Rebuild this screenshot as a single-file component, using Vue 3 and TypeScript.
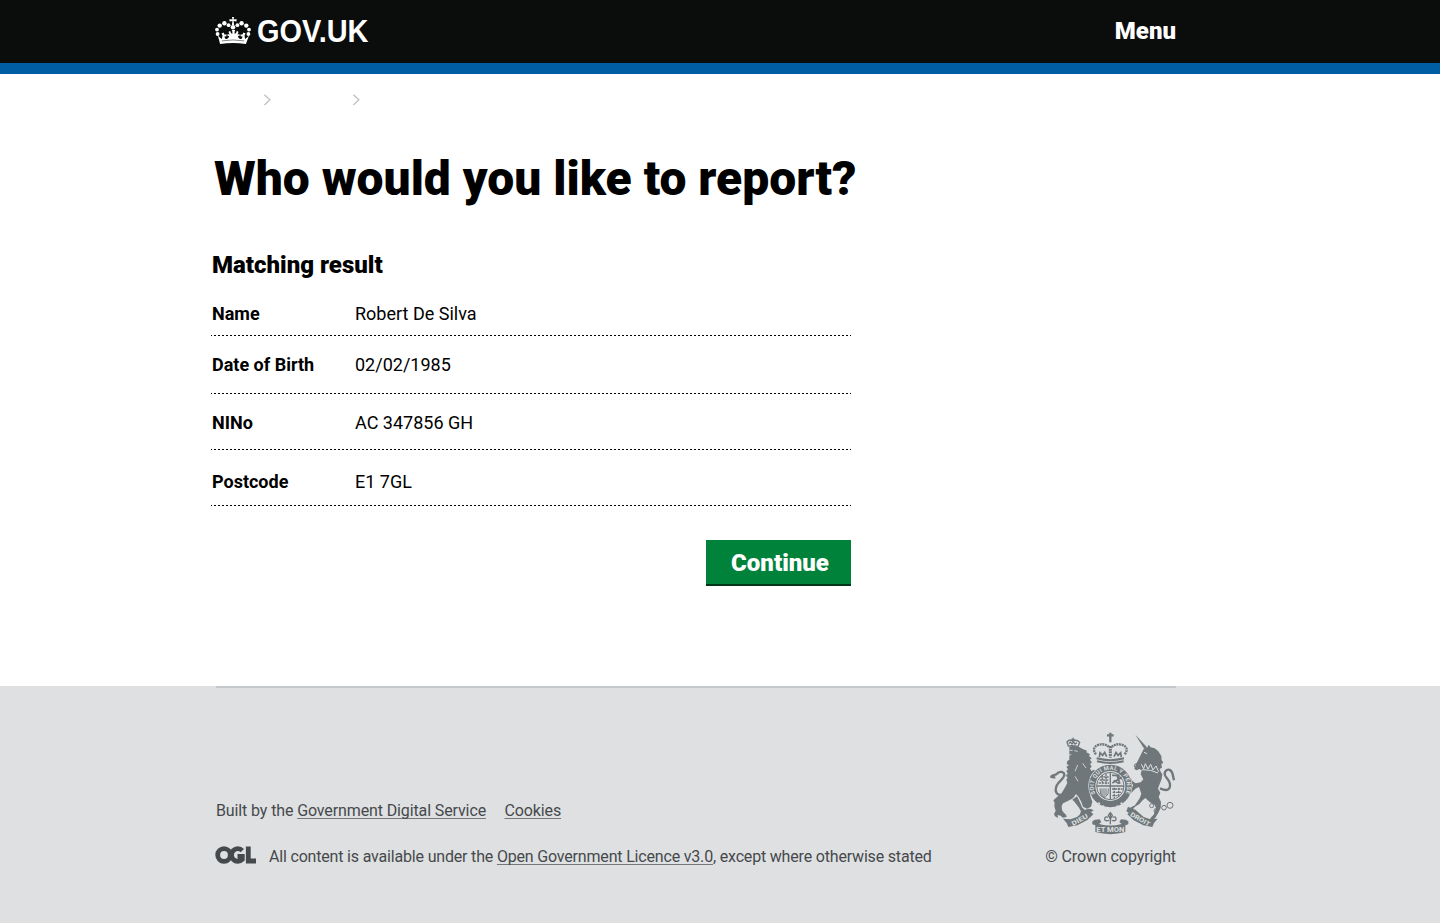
<script setup lang="ts">
interface Detail { label: string; value: string; height: number; top: number }

const details: Detail[] = [
  { label: 'Name', value: 'Robert De Silva', height: 43, top: 10 },
  { label: 'Date of Birth', value: '02/02/1985', height: 58, top: 18 },
  { label: 'NINo', value: 'AC 347856 GH', height: 56, top: 18 },
  { label: 'Postcode', value: 'E1 7GL', height: 56, top: 21 },
]

const beads: [number, number, number][] = [
  [2.6, 17, 1.9], [2, 12.6, 1.9], [4.7, 8.6, 2.2], [9.4, 6.3, 2.2], [13.6, 8.2, 1.9],
  [22.4, 8.2, 1.9], [26.6, 6.3, 2.2], [31.3, 8.6, 2.2], [34, 12.6, 1.9], [33.4, 17, 1.9],
]
</script>

<template>
  <div class="page">
    <header class="header">
      <div class="wrap header-row">
        <a class="brand">
          <svg class="crown" viewBox="0 0 36 27" width="36" height="27">
            <g fill="#fff">
              <circle v-for="(b, i) in beads" :key="i" :cx="b[0]" :cy="b[1]" :r="b[2]" />
              <circle cx="18" cy="10.200" r="2.300" />
              <path d="M17 0h2l-.4 2.400 2.900-.5v2.700l-2.900-.5.5 4h-2.200l.5-4-2.900.5V1.900l2.900.5z" />
              <path d="M5.100 27 2.800 18.300c1.600 2 2.700 3.100 4.100 3.600l.6-3.500-1-2 2.100-1 .9 2.200 2.200-.2-.5 2.200-1.600-.4c.1 1.900.5 2.900 1.700 2.800 1.600-.1 2.600-1.500 2.900-3.200l-1.600.5-.1-2.400 2 .5-1-2.300 1.600-1.300.9 2.300 1.300 1 .1-2.300-.6-1.700h3.400l-.6 1.700.1 2.300 1.300-1 .9-2.300 1.600 1.300-1 2.300 2-.5-.1 2.400-1.600-.5c.3 1.700 1.300 3.100 2.900 3.200 1.200.1 1.600-.9 1.700-2.800l-1.600.4-.5-2.200 2.200.2.900-2.200 2.100 1-1 2 .6 3.500c1.400-.5 2.500-1.600 4.100-3.600L30.900 27q-12.900-1.800-25.800 0z" />
            </g>
            <path d="M6.800 23.900q11.200-1.900 22.400 0" fill="none" stroke="#0b0c0c" stroke-width=".5" />
          </svg>
          <svg class="wordmark" width="112" height="30" viewBox="0 0 112 30">
            <text x="-1" y="25.300" textLength="111.500" lengthAdjust="spacingAndGlyphs">GOV.UK</text>
          </svg>
        </a>
        <a class="menu">Menu</a>
      </div>
    </header>

    <nav class="crumbs">
      <svg v-for="n in 2" :key="n" width="8" height="12" viewBox="0 0 8 12"><path d="M1.400.7 6.900 5.800 1.400 10.900" fill="none" stroke="#bfc1c3" stroke-width="1.300" /></svg>
    </nav>

    <main class="main">
      <h1>Who would you like to report?</h1>
      <section class="result">
        <h2>Matching result</h2>
        <dl>
          <div v-for="d in details" :key="d.label" class="row" :style="{ height: d.height + 'px', paddingTop: d.top + 'px' }">
            <dt>{{ d.label }}</dt>
            <dd>{{ d.value }}</dd>
          </div>
        </dl>
        <button type="button">Continue</button>
      </section>
    </main>

    <footer class="footer">
      <div class="wrap footer-inner">
        <div class="meta">
          <p class="built">Built by the <a>Government Digital Service</a><a class="cookies">Cookies</a></p>
          <div class="licence">
            <svg class="ogl" width="41" height="18" viewBox="0 0 41 18">
              <g fill="none" stroke="#46494c" stroke-width="4.800">
                <circle cx="9" cy="9" r="6.300" />
                <path d="M27.300 4.600A6.300 6.300 0 1 0 27.300 13.400V10.400H22.500" />
                <path d="M33.300.5v14.500H41" />
              </g>
            </svg>
            <p>All content is available under the <a>Open Government Licence v3.0</a>, except where otherwise stated</p>
          </div>
        </div>
        <div class="copyright">
          <svg class="arms" viewBox="30 18 381 312" width="127" height="104">
            <g fill="#6f777b">
              <!-- lion -->
              <path d="m91 65 11-3 17 3 12 7 13 5-2 5 11 6-3 5 8 7-5 4 6 9-6 3 5 9-5 5 4 8 9-4 9 7-4 8-12 2-6 4 1 16-3 13 5 16-2 14 6 16-4 15-12 6-12-6-5-15-8-14-8-9-9 13-17 9-13 6-4 8 1 12 4 7 8 7 2 7-12 2-6-6-9-2 1 9-9-5-3-7 5-10-4-13 1-11-4-7 11-10 14-12 12-20 5-10-3-10 4-7-6-4 6-7-4-8 5-5-5-8 8-4-7-4 2-9 6-4z" />
              <path d="m114 214 10 20 5 13 14 13-3 8-7 4-5-4-6 2 4-11-7-12-14-18-5-5z" />
              <!-- unicorn -->
              <path d="m289 29 35 38-8 5z" />
              <path d="m314 72 12-6 3-7 6 8 12 3 11 9 9 14 1 12 5 8-6 4 2 11-7 4 3 8 5 8-2 14-8 20-3 9 7 12-5 13 7 15-1 17-7 15-9 15-8 8-9 1 3-9 9-9 7-20-4-9-15-9-13-12-8 7-10 11-13 8-11 13-7 6-8-5 5-14 6 3 15-7 14-21 5-14-7-20-11 5-10 11-12 8-11-4 7-10 8-1 12-14-8-9-11-3-4-8 5-7 10 4 5 10 10 7 15-3 8-9-8-15 3-12-7-4-8 4-7-4 3-10z" />
            </g>
            <circle cx="214" cy="183" r="66" fill="#dee0e2" />
            <g fill="none" stroke="#6f777b">
              <!-- lion crown -->
              <path d="M88 63 84 51q8-11 18-2 10-8 20 3l-5 13q-14-5-29-2zM102 38v14M97 43h10M90 56l4-5 5 6 5-6 4 6 6-4" stroke-width="4" />
              <!-- tails -->
              <path d="M90 209q-37 8-40-13 0-16 15-29 20-20 4-26-10-2-17 7l-15 5M34 154q7 4 15 3" stroke-width="7" />
              <path d="M363 190q31 14 30-12-2-10-9-18-13-14-2-24 11-7 18 8l5 22" stroke-width="7" />
              <!-- royal crown -->
              <path d="M214 23v29M204 31h20" stroke-width="7" />
              <path d="M171 88q-14-18 4-27 21-9 37 7M257 88q14-18-4-27-21-9-37 7" stroke-width="7" stroke-dasharray="6 2" />
              <path d="M173 100q41 11 82 0M174 109q40 10 80 0" stroke-width="6" />
              <path d="M214 63v35" stroke-width="9" stroke-dasharray="6 2" />
              <path d="m181 96 2-13 8 8 6-9 6 13M225 95l6-13 6 9 8-8 2 13" stroke-width="5" />
              <!-- garter and shield -->
              <circle cx="214" cy="183" r="54.500" stroke-width="19" />
              <circle cx="214" cy="183" r="41" stroke-width="3" />
              <path d="M214 142v83M173 183h82" stroke-width="4" />
              <path d="M184 156h26M182 165h28M179 174h31M190 150v28M201 146v32" stroke-width="4" stroke-dasharray="7 2" />
              <path d="M219 151h20v9h10M220 174l28-17M224 166l16 10M233 149l10 27" stroke-width="5" />
              <path d="M219 192h32M221 202h27M220 212h18M226 188v32M239 188v26" stroke-width="4" stroke-dasharray="7 2" />
              <path d="m183 190 2 17 11 12 11-12 1-17M189 190v22M195 190v29M201 190v21" stroke-width="3" />
              <!-- thistle and rose -->
              <path d="M214 264v34M207 277q-10-4-10 5 0 8 13 4M221 277q10-4 10 5 0 8-13 4M208 271l6-8 6 8-6 12z" stroke-width="4" />
              <!-- chain -->
              <path d="M344 190q18 9 7 22-10 13 3 24" stroke-width="3" />
              <circle cx="353" cy="204" r="6" stroke-width="3" /><circle cx="338" cy="242" r="6" stroke-width="3" />
              <circle cx="351" cy="257" r="6" stroke-width="3" /><circle cx="375" cy="248" r="7" stroke-width="3" /><circle cx="393" cy="241" r="9" stroke-width="3" />
              <circle cx="292" cy="122" r="6" stroke-width="3" />
            </g>
            <g fill="none" stroke="#dee0e2">
              <path d="M92 76h9M106 77l10 2M97 88l-7 3M116 120l-8 19M131 115l10 14M108 154l9 15" stroke-width="2.500" />
              <path d="m307 118 7 13 5-15 8 16 8-14 7 17 9-12 8 17M309 134q27-1 48 10M315 82l9 4" stroke-width="3" />
            </g>
            <g fill="#6f777b">
              <path d="m72 281 22 2 20-7 25-22q15-7 25 2l-8 5 7 7-18 17-30 16-27 5-5-12z" />
              <path d="m356 281-22 2-20-7-25-22q-15-7-25 2l8 5-7 7 18 17 30 16 27 5 5-12z" />
              <path d="m160 289 8-5 14-1 5 8-7 6q34 9 68 0l-7-6 5-8 14 1 8 5v9l-9 3v20q-45 13-90 0v-20l-9-3z" />
            </g>
            <g class="motto">
              <path id="garter" d="M170 208A50 50 0 1 1 258 208" fill="none" />
              <text font-size="17"><textPath href="#garter" startOffset="2" textLength="200">SOIT QUI MAL Y PENSE</textPath></text>
              <text x="172" y="321" font-size="20" textLength="84" lengthAdjust="spacingAndGlyphs">ET MON</text>
              <text transform="translate(102 303) rotate(-29)" font-size="19" textLength="53" lengthAdjust="spacingAndGlyphs">DIEU</text>
              <text transform="translate(272 272) rotate(30)" font-size="19" textLength="66" lengthAdjust="spacingAndGlyphs">DROIT</text>
              <path d="m178 233 18 13 18 4 18-4 18-13" fill="none" stroke="#dee0e2" stroke-width="5" stroke-dasharray="6 9" />
            </g>
          </svg>
          <p>© Crown copyright</p>
        </div>
      </div>
    </footer>
  </div>
</template>

<style>
body { margin: 0; }
</style>

<style scoped>
* { box-sizing: border-box; }
.page { width: 1440px; height: 923px; display: flex; flex-direction: column; overflow: hidden; background: #fff; color: #000; font-family: Roboto, "Liberation Sans", sans-serif; }
h1, h2, p, dl, dd { margin: 0; }
.wrap { width: 961px; margin-left: 215px; }
.header { height: 74px; flex: none; background: #0b0c0c; border-bottom: 11px solid #005ea5; }
.header-row { display: flex; justify-content: space-between; height: 63px; }
.brand { display: flex; padding-top: 17px; }
.crown { display: block; }
.wordmark { display: block; margin-left: 7px; overflow: visible; }
.wordmark text { font: 700 30.5px "Liberation Sans", Arial, sans-serif; fill: #fff; }
.menu { color: #fff; font-size: 24px; font-weight: 900; line-height: 28px; margin-top: 17px; }
.crumbs { height: 52px; flex: none; display: flex; gap: 81px; padding: 20px 0 0 263px; }
.main { height: 560px; flex: none; margin-left: 211px; width: 645px; }
h1 { margin-left: 3px; padding-top: 25px; font-size: 48px; line-height: 56px; font-weight: 900; white-space: nowrap; }
.result { width: 640px; display: flex; flex-direction: column; }
h2 { margin: 44px 0 0 1px; font-size: 24px; line-height: 28px; font-weight: 900; height: 42px; }
.row { display: flex; font-size: 18px; line-height: 22px; padding-left: 1px; background: repeating-linear-gradient(90deg, #000 0 1px, transparent 1px 3px, #000 3px 4px) bottom left / 100% 1px no-repeat; }
dt { width: 143px; font-weight: 700; }
button { align-self: flex-end; width: 145px; height: 46px; margin-top: 34px; padding: 2px 0 0 3px; border: 0; border-bottom: 2px solid #003618; background: #00823b; color: #fff; font: 900 24px/28px Roboto, sans-serif; }
.footer { flex: 1; background: #dee0e2; color: #46494c; font-size: 16px; line-height: 20px; }
.footer-inner { display: flex; justify-content: space-between; height: 237px; background: linear-gradient(#c5c8ca, #c5c8ca) 1px 0 / 960px 2px no-repeat; white-space: nowrap; }
.built { margin: 115px 0 0 1px; letter-spacing: -.12px; }
.footer a { text-decoration: underline; text-decoration-color: #74787b; text-decoration-skip-ink: none; text-underline-offset: 2px; }
.footer .cookies { margin-left: 18.5px; }
.licence { display: flex; margin-top: 26px; letter-spacing: -.18px; }
.ogl { flex: none; margin: 0 13px 0 0; position: relative; top: -1px; }
.copyright { display: flex; flex-direction: column; align-items: flex-end; padding-top: 45px; letter-spacing: -.1px; }
.arms { display: block; flex: none; margin-bottom: 12px; }
.motto text { fill: #dee0e2; font-family: Roboto, sans-serif; font-weight: 700; letter-spacing: 0; }
</style>
